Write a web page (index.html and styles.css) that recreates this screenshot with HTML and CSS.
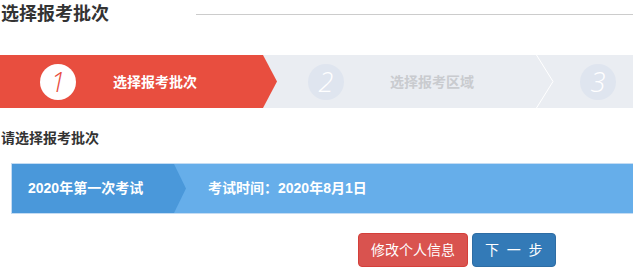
FILE: index.html
```html
<!DOCTYPE html>
<html lang="zh-CN">
<head>
<meta charset="utf-8">
<title>选择报考批次</title>
<link rel="stylesheet" href="styles.css">
</head>
<body>
<div class="page">
  <div class="header">
    <h2 class="title">选择报考批次</h2>
    <div class="rule"></div>
  </div>

  <div class="steps">
    <div class="step step-active">
      <span class="num num-active">1</span>
      <span class="label">选择报考批次</span>
    </div>
    <div class="step step-next">
      <span class="num">2</span>
      <span class="label label-muted">选择报考区域</span>
      <svg class="chevron" width="18" height="53" viewBox="0 0 18 53"><polyline points="0.5,0 17,26.5 0.5,53" fill="none" stroke="#ffffff" stroke-width="1"/></svg>
      <span class="num num-last">3</span>
    </div>
  </div>

  <div class="subtitle">请选择报考批次</div>

  <div class="batch">
    <div class="batch-name">2020年第一次考试</div>
    <div class="batch-time">考试时间：2020年8月1日</div>
  </div>

  <div class="actions">
    <button class="btn btn-red">修改个人信息</button>
    <button class="btn btn-blue">下&nbsp;&nbsp;一&nbsp;&nbsp;步</button>
  </div>
</div>
</body>
</html>
```

FILE: styles.css
```css
html, body {
  margin: 0;
  padding: 0;
  background: #ffffff;
}
body {
  font-family: "Liberation Sans", "Noto Sans CJK SC", sans-serif;
  color: #333333;
}
.page {
  width: 633px;
}
.header {
  display: flex;
  align-items: center;
  height: 28px;
}
.title {
  margin: 0 0 0 1px;
  width: 195px;
  font-size: 18px;
  line-height: 28px;
  font-weight: bold;
  color: #333333;
}
.rule {
  flex: 1;
  border-top: 1px solid #cccccc;
  margin-top: 1px;
}
.steps {
  margin-top: 27px;
  height: 53px;
  display: flex;
  background: #eaedf2;
}
.step {
  display: flex;
  align-items: center;
  height: 53px;
}
.step-active {
  width: 277px;
  box-sizing: border-box;
  padding-left: 40px;
  background: #e84e3f;
  clip-path: polygon(0 0, 263px 0, 277px 50%, 263px 100%, 0 100%);
}
.step-next {
  padding-left: 31px;
}
.num {
  width: 36px;
  height: 36px;
  border-radius: 50%;
  background: #dfe5ef;
  color: #ffffff;
  font-family: "Open Sans", "Liberation Sans", sans-serif;
  font-style: italic;
  font-weight: 300;
  font-size: 27px;
  line-height: 36px;
  text-align: center;
  flex: none;
}
.num-active {
  background: #ffffff;
  color: #e84e3f;
}
.label {
  margin-left: 37px;
  font-size: 14px;
  font-weight: bold;
  color: #ffffff;
  line-height: 20px;
}
.label-muted {
  margin-left: 46px;
  color: #c9cbcf;
}
.chevron {
  display: block;
  margin-left: 62px;
  flex: none;
}
.num-last {
  margin-left: 26px;
}
.subtitle {
  margin: 20px 0 0 1px;
  height: 20px;
  line-height: 20px;
  font-size: 14px;
  font-weight: bold;
  color: #333333;
}
.batch {
  margin: 15px 0 0 11px;
  height: 49px;
  border: 1px solid #c4dcf3;
  border-right: none;
  background: #66aeea;
  display: flex;
  align-items: center;
  color: #ffffff;
  font-size: 14px;
  font-weight: bold;
}
.batch-name {
  width: 174px;
  height: 49px;
  box-sizing: border-box;
  padding-left: 16px;
  line-height: 49px;
  background: #4a98da;
  clip-path: polygon(0 0, 162px 0, 174px 50%, 162px 100%, 0 100%);
  flex: none;
}
.batch-time {
  margin-left: 22px;
  line-height: 49px;
}
.actions {
  margin-top: 19px;
  padding-left: 358px;
  display: flex;
  gap: 4px;
}
.btn {
  height: 34px;
  padding: 0 12px;
  border-radius: 4px;
  font-family: "Liberation Sans", "Noto Sans CJK SC", sans-serif;
  font-size: 14px;
  line-height: 32px;
  color: #ffffff;
  cursor: pointer;
}
.btn-red {
  background: #d9534f;
  border: 1px solid #d43f3a;
}
.btn-blue {
  background: #337ab7;
  border: 1px solid #2e6da4;
}
```
